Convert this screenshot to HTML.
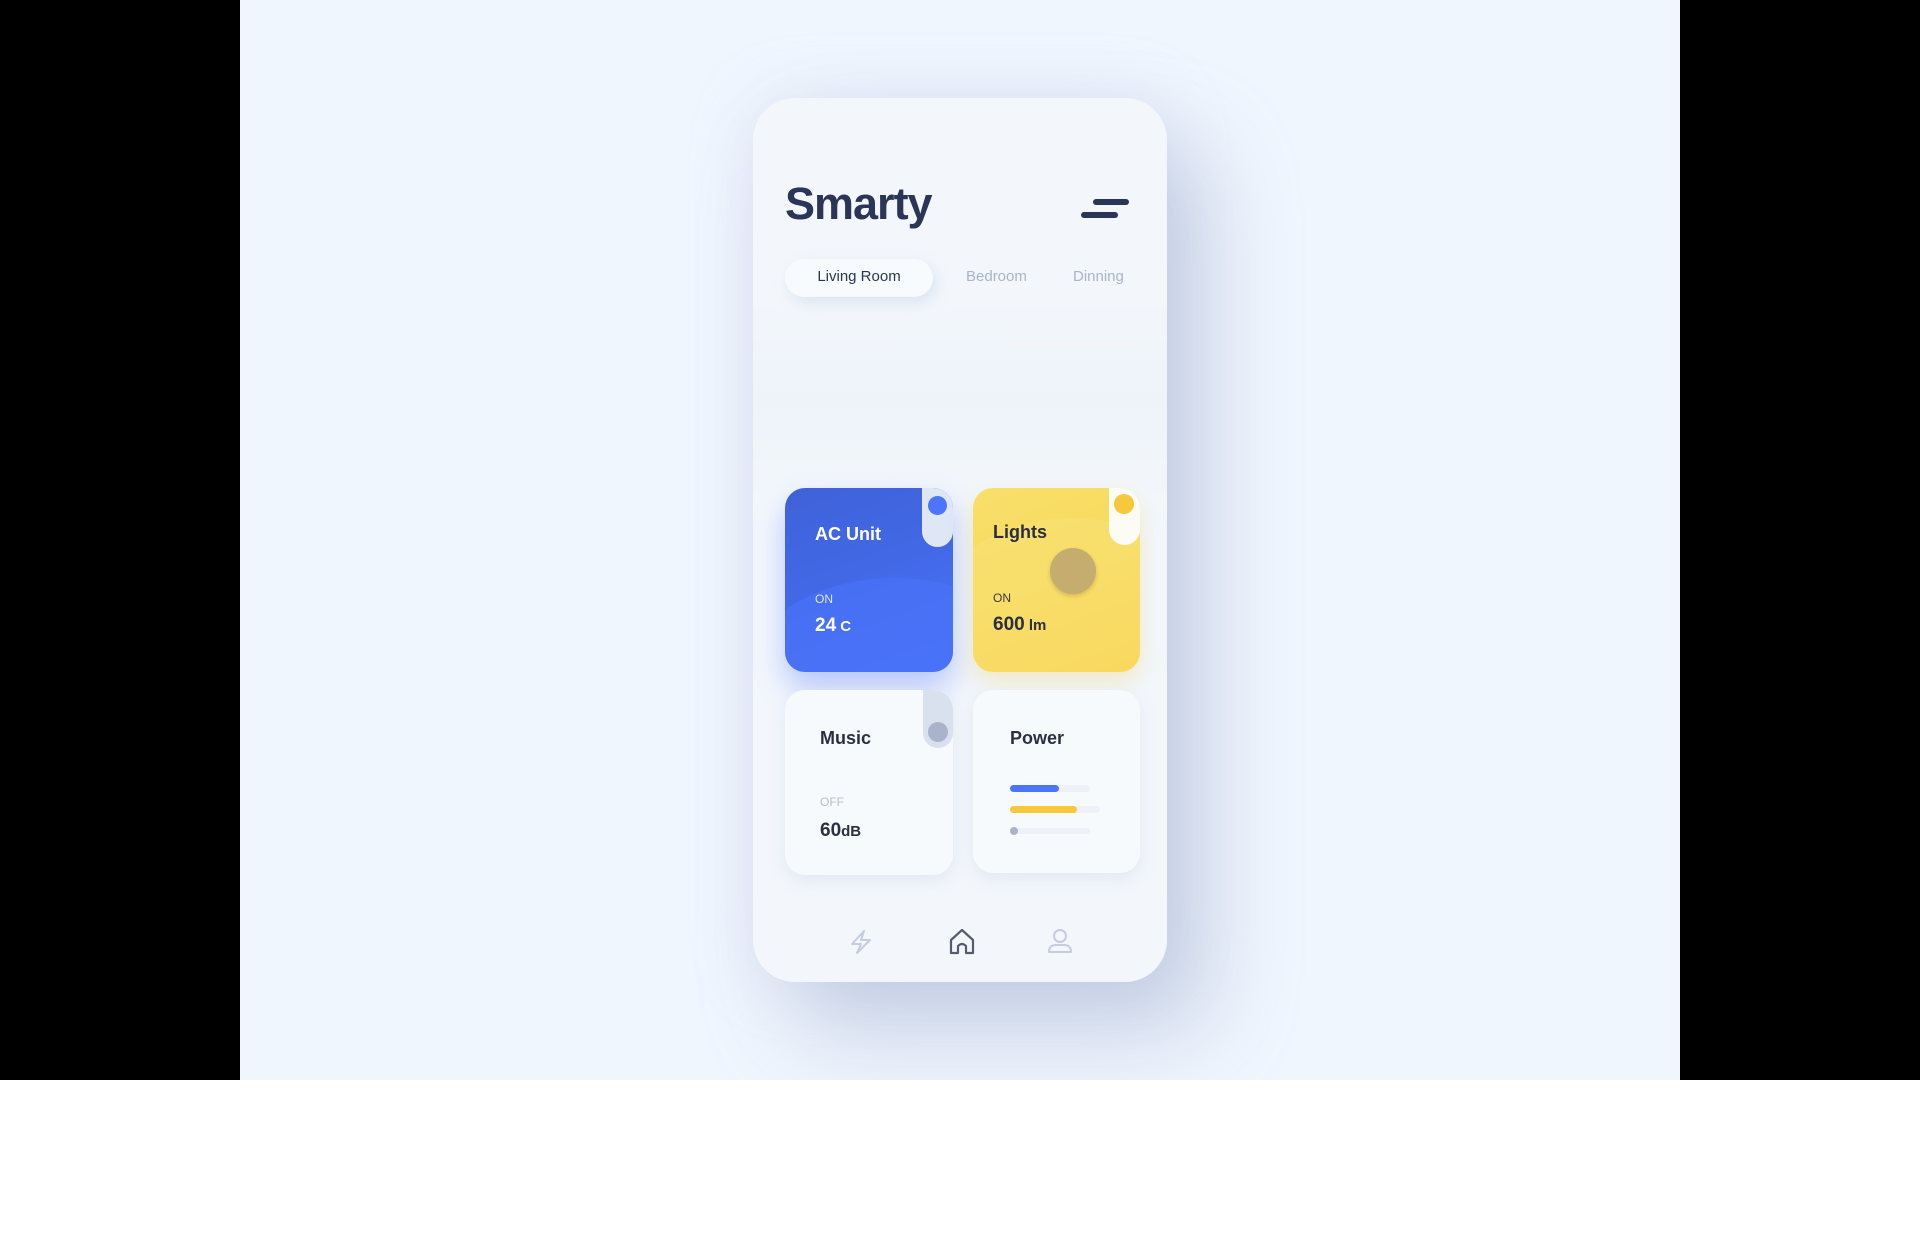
<!DOCTYPE html>
<html><head><style>
*{margin:0;padding:0;box-sizing:border-box}
body{width:1920px;height:1252px;background:#fff;position:relative;overflow:hidden;font-family:"Liberation Sans",sans-serif}
.blk{position:absolute;top:0;height:1080px;width:240px;background:#000;z-index:5}
.bg{position:absolute;left:240px;top:0;width:1440px;height:1080px;background:#f0f6fe;overflow:hidden}
.phone{position:absolute;left:753px;top:98px;width:414px;height:884px;border-radius:42px;background:#f3f7fc;box-shadow:40px 50px 90px rgba(150,165,200,.45),0 0 60px rgba(200,210,235,.4)}
.abs{position:absolute}
.card{position:absolute;border-radius:20px;overflow:hidden}
.t{position:absolute;font-weight:bold}
</style></head><body>
<div class="blk" style="left:0"></div>
<div class="blk" style="left:1680px"></div>
<div class="abs" style="left:0;top:1080px;width:1920px;height:172px;background:#fff;z-index:5"></div>
<div class="bg"></div>
<div class="phone"></div>
<div class="abs" style="left:753px;top:300px;width:414px;height:200px;background:linear-gradient(#f3f7fc,#eef3f9 50%,#f3f7fc)"></div>
<div class="t" style="left:785px;top:178px;font-size:45px;color:#2a3558;letter-spacing:-1px">Smarty</div>
<div class="abs" style="left:1093px;top:199px;width:36px;height:6px;border-radius:3px;background:#2a3558"></div>
<div class="abs" style="left:1081px;top:212px;width:37px;height:6px;border-radius:3px;background:#2a3558"></div>
<div class="abs" style="left:785px;top:259px;width:148px;height:38px;border-radius:19px;background:#f8fbfe;box-shadow:4px 6px 14px rgba(180,195,220,.35)"></div>
<div class="abs" style="left:785px;top:268px;width:148px;text-align:center;font-size:15px;color:#2a3558">Living Room</div>
<div class="abs" style="left:966px;top:268px;font-size:15px;color:#aab4c8">Bedroom</div>
<div class="abs" style="left:1073px;top:268px;font-size:15px;color:#aab4c8">Dinning</div>

<div class="card" style="left:785px;top:488px;width:168px;height:184px;background:linear-gradient(160deg,#3f62d8 0%,#4268e6 45%,#4a75fc 100%);box-shadow:0 16px 30px rgba(70,110,250,.35)">
<div class="abs" style="left:-40px;top:90px;width:300px;height:200px;border-radius:50%;background:#4872f8;opacity:.7"></div>
<div class="abs" style="left:137px;top:0;width:31px;height:59px;border-radius:0 16px 16px 16px;background:#dfe6f4"></div>
<div class="abs" style="left:143px;top:8px;width:19px;height:19px;border-radius:50%;background:#4a75fc"></div>
<div class="t" style="left:30px;top:36px;font-size:18px;color:#fff">AC Unit</div>
<div class="abs" style="left:30px;top:104px;font-size:12px;color:#dfe6ff">ON</div>
<div class="t" style="left:30px;top:127px;font-size:19px;color:#fff">24<span style="font-size:15px"> C</span></div>
</div>

<div class="card" style="left:973px;top:488px;width:167px;height:184px;background:linear-gradient(160deg,#f8e06c 0%,#f7d85a 50%,#f8cc45 100%);box-shadow:0 10px 24px rgba(240,200,80,.3)">
<div class="abs" style="left:-40px;top:30px;width:280px;height:200px;border-radius:50%;background:#f9e47a;opacity:.5"></div>
<div class="abs" style="left:136px;top:0;width:31px;height:57px;border-radius:0 16px 16px 16px;background:#fcfbf4"></div>
<div class="abs" style="left:141px;top:6px;width:20px;height:20px;border-radius:50%;background:#f7c93a"></div>
<div class="abs" style="left:77px;top:60px;width:46px;height:46px;border-radius:50%;background:#c4ad6e;box-shadow:0 2px 4px rgba(120,100,40,.3)"></div>
<div class="t" style="left:20px;top:34px;font-size:18px;color:#2a2f40">Lights</div>
<div class="abs" style="left:20px;top:103px;font-size:12px;color:#3a3a3a">ON</div>
<div class="t" style="left:20px;top:126px;font-size:19px;color:#2a2f40">600<span style="font-size:15px"> lm</span></div>
</div>

<div class="card" style="left:785px;top:690px;width:168px;height:185px;background:#f7fafd;box-shadow:0 6px 16px rgba(190,200,225,.3)">
<div class="abs" style="left:138px;top:0;width:30px;height:58px;border-radius:0 16px 16px 16px;background:#d9e1ee"></div>
<div class="abs" style="left:143px;top:32px;width:20px;height:20px;border-radius:50%;background:#a9b3cc"></div>
<div class="t" style="left:35px;top:38px;font-size:18px;color:#2a3040">Music</div>
<div class="abs" style="left:35px;top:105px;font-size:12px;color:#b5bccb">OFF</div>
<div class="t" style="left:35px;top:130px;font-size:19px;color:#2a3040">60<span style="font-size:15px">dB</span></div>
</div>

<div class="card" style="left:973px;top:690px;width:167px;height:183px;background:#f7fafd;box-shadow:0 6px 16px rgba(190,200,225,.3)">
<div class="t" style="left:37px;top:38px;font-size:18px;color:#2a3040">Power</div>
<div class="abs" style="left:37px;top:95px;width:80px;height:7px;border-radius:4px;background:#eef2f8"></div>
<div class="abs" style="left:37px;top:95px;width:49px;height:7px;border-radius:4px;background:#4a75fc"></div>
<div class="abs" style="left:37px;top:116px;width:90px;height:7px;border-radius:4px;background:#eef2f8"></div>
<div class="abs" style="left:37px;top:116px;width:67px;height:7px;border-radius:4px;background:#f7c93a"></div>
<div class="abs" style="left:37px;top:138px;width:80px;height:6px;border-radius:3px;background:#eef2f8"></div>
<div class="abs" style="left:37px;top:137px;width:8px;height:8px;border-radius:50%;background:#a9b3cc"></div>
</div>

<svg class="abs" style="left:848px;top:928px" width="26" height="28" viewBox="0 0 26 28"><path d="M16 3 L4 16 H13 L9 25 L22 12 H13 Z" fill="none" stroke="#c5cddc" stroke-width="2" stroke-linejoin="round"/></svg>
<svg class="abs" style="left:949px;top:928px" width="26" height="28" viewBox="0 0 26 28"><path d="M2 12 L13 2 L24 12 V25 H17 V18 Q13 14 9 18 V25 H2 Z" fill="none" stroke="#555c6e" stroke-width="2.2" stroke-linejoin="round"/></svg>
<svg class="abs" style="left:1047px;top:928px" width="26" height="28" viewBox="0 0 26 28"><circle cx="13" cy="8" r="6" fill="none" stroke="#c5cddc" stroke-width="2"/><path d="M2 24 Q2 17 9 17 H17 Q24 17 24 24 Z" fill="none" stroke="#c5cddc" stroke-width="2" stroke-linejoin="round"/></svg>
</body></html>
